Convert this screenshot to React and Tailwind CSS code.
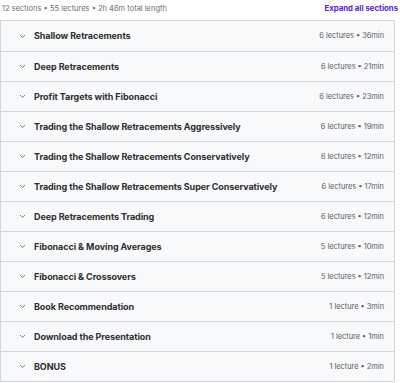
import React from 'react';

const sections = [
  ['Shallow Retracements', '6 lectures • 36min'],
  ['Deep Retracements', '6 lectures • 21min'],
  ['Profit Targets with Fibonacci', '6 lectures • 23min'],
  ['Trading the Shallow Retracements Aggressively', '6 lectures • 19min'],
  ['Trading the Shallow Retracements Conservatively', '6 lectures • 12min'],
  ['Trading the Shallow Retracements Super Conservatively', '6 lectures • 17min'],
  ['Deep Retracements Trading', '6 lectures • 12min'],
  ['Fibonacci & Moving Averages', '5 lectures • 10min'],
  ['Fibonacci & Crossovers', '5 lectures • 12min'],
  ['Book Recommendation', '1 lecture • 3min'],
  ['Download the Presentation', '1 lecture • 1min'],
  ['BONUS', '1 lecture • 2min'],
];

const Chevron = () => (
  <svg width="7" height="5" viewBox="0 0 7 5" fill="none" className="shrink-0">
    <path d="M1 1l2.5 2.5L6 1" stroke="#6a6f73" strokeWidth="0.9" />
  </svg>
);

export default function App() {
  return (
    <div className="w-[400px] h-[383px] bg-white overflow-hidden font-['Inter',sans-serif]">
      <div className="flex items-center justify-between h-[18px] pl-[2px] pr-[2px]">
        <span className="text-[7.5px] text-[#6a6f73]">12 sections • 55 lectures • 2h 46m total length</span>
        <span className="text-[7.8px] font-bold text-[#5624d0]">Expand all sections</span>
      </div>
      <div className="mt-[2px] mr-[5px] border border-[#d1d7dc]">
        {sections.map(([title, meta], i) => (
          <div
            key={i}
            className={`flex items-center h-[30px] bg-[#f7f9fa] pl-[18px] pr-[10px] ${i > 0 ? 'border-t border-[#d1d7dc]' : ''}`}
          >
            <Chevron />
            <span className="ml-[8px] flex-1 text-[9px] font-bold text-[#2d2f31] tracking-[-0.08px]">{title}</span>
            <span className="text-[7.4px] text-[#595c5f]">{meta}</span>
          </div>
        ))}
      </div>
    </div>
  );
}
